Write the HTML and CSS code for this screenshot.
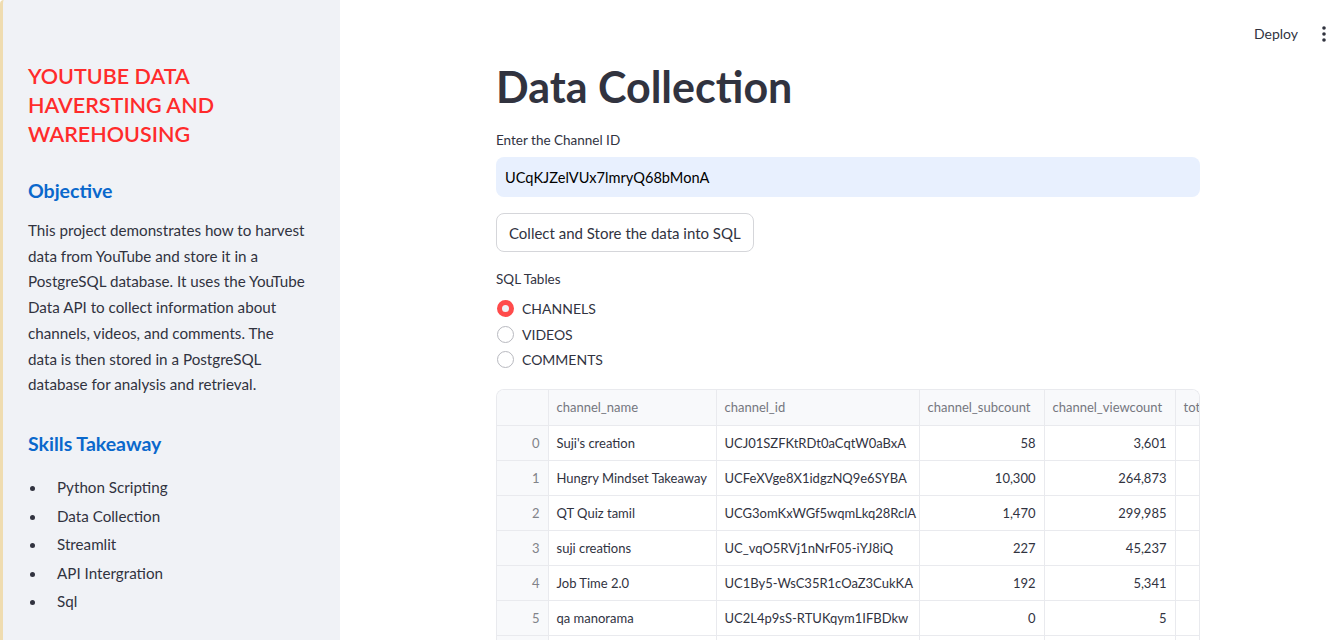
FILE: index.html
```html
<!DOCTYPE html>
<html lang="en">
<head>
<meta charset="utf-8">
<title>Data Collection</title>
<link rel="stylesheet" href="styles.css">
</head>
<body>
<div class="app">
  <aside class="sidebar">
    <h2 class="app-title">YOUTUBE DATA HAVERSTING AND WAREHOUSING</h2>
    <h3 class="side-head">Objective</h3>
    <p class="side-text">This project demonstrates how to harvest data from YouTube and store it in a PostgreSQL database. It uses the YouTube Data API to collect information about channels, videos, and comments. The data is then stored in a PostgreSQL database for analysis and retrieval.</p>
    <h3 class="side-head skills">Skills Takeaway</h3>
    <ul class="skills-list">
      <li>Python Scripting</li>
      <li>Data Collection</li>
      <li>Streamlit</li>
      <li>API Intergration</li>
      <li>Sql</li>
    </ul>
  </aside>
  <main class="main">
    <header class="toolbar">
      <span class="deploy">Deploy</span>
      <span class="menu-dots"><svg width="4" height="16" viewBox="0 0 4 16"><circle cx="2" cy="2" r="1.8" fill="#31333f"/><circle cx="2" cy="8" r="1.8" fill="#31333f"/><circle cx="2" cy="14" r="1.8" fill="#31333f"/></svg></span>
    </header>
    <div class="block">
      <h1 class="page-title">Data Collection</h1>
      <label class="field-label">Enter the Channel ID</label>
      <div class="text-input">UCqKJZelVUx7lmryQ68bMonA</div>
      <button class="btn">Collect and Store the data into SQL</button>
      <div class="field-label radio-label">SQL Tables</div>
      <div class="radio-group">
        <div class="radio checked"><span class="dot"></span>CHANNELS</div>
        <div class="radio"><span class="dot"></span>VIDEOS</div>
        <div class="radio"><span class="dot"></span>COMMENTS</div>
      </div>
      <div class="table-wrap">
        <table class="df">
          <thead>
            <tr><th class="idx"></th><th class="c-name">channel_name</th><th class="c-id">channel_id</th><th class="c-sub">channel_subcount</th><th class="c-view">channel_viewcount</th><th class="c-tot">total_videos</th></tr>
          </thead>
          <tbody>
            <tr><td class="idx">0</td><td>Suji's creation</td><td>UCJ01SZFKtRDt0aCqtW0aBxA</td><td class="num">58</td><td class="num">3,601</td><td class="num"></td></tr>
            <tr><td class="idx">1</td><td>Hungry Mindset Takeaway</td><td>UCFeXVge8X1idgzNQ9e6SYBA</td><td class="num">10,300</td><td class="num">264,873</td><td class="num"></td></tr>
            <tr><td class="idx">2</td><td>QT Quiz tamil</td><td>UCG3omKxWGf5wqmLkq28RclA</td><td class="num">1,470</td><td class="num">299,985</td><td class="num"></td></tr>
            <tr><td class="idx">3</td><td>suji creations</td><td>UC_vqO5RVj1nNrF05-iYJ8iQ</td><td class="num">227</td><td class="num">45,237</td><td class="num"></td></tr>
            <tr><td class="idx">4</td><td>Job Time 2.0</td><td>UC1By5-WsC35R1cOaZ3CukKA</td><td class="num">192</td><td class="num">5,341</td><td class="num"></td></tr>
            <tr><td class="idx">5</td><td>qa manorama</td><td>UC2L4p9sS-RTUKqym1IFBDkw</td><td class="num">0</td><td class="num">5</td><td class="num"></td></tr>
            <tr class="last"><td class="idx"></td><td></td><td></td><td class="num"></td><td class="num"></td><td class="num"></td></tr>
          </tbody>
        </table>
      </div>
    </div>
  </main>
</div>
</body>
</html>
```

FILE: styles.css
```css
* { box-sizing: border-box; }
html, body {
  margin: 0;
  padding: 0;
  height: 100%;
  overflow: hidden;
}
body {
  font-family: Lato, "Liberation Sans", sans-serif;
  color: #31333f;
  background: #ffffff;
}
.app {
  display: flex;
  height: 640px;
}
.sidebar {
  width: 340px;
  flex: none;
  background: #f0f2f6;
  padding: 62px 0 0 25px;
  border-left: 3px solid #efdcb0;
  border-top-left-radius: 4px;
}
.app-title {
  margin: 0;
  width: 260px;
  font-size: 21.5px;
  line-height: 29px;
  font-weight: 600;
  color: #ff2b2b;
}
.side-head {
  margin: 30px 0 0 0;
  font-size: 19.5px;
  line-height: 24px;
  font-weight: 700;
  color: #0a68cc;
}
.side-text {
  margin: 15px 0 0 0;
  width: 278px;
  font-size: 15.2px;
  line-height: 25.7px;
  color: #31333f;
}
.side-head.skills { margin-top: 34px; }
.skills-list {
  margin: 19px 0 0 0;
  padding: 0;
  list-style: none;
  font-size: 15.2px;
  line-height: 25.6px;
}
.skills-list li {
  margin-bottom: 3px;
  padding-left: 29px;
  position: relative;
}
.skills-list li::before {
  content: "";
  position: absolute;
  left: 2px;
  top: 11px;
  width: 5px;
  height: 5px;
  border-radius: 50%;
  background: #31333f;
}
.main {
  flex: 1;
  position: relative;
}
.toolbar {
  position: absolute;
  top: 25px;
  right: 13px;
  display: flex;
  align-items: center;
  gap: 24px;
  font-size: 14px;
}
.deploy { color: #31333f; }
.menu-dots { display: flex; align-items: center; }
.block {
  margin-left: 156px;
  width: 704px;
  display: flex;
  flex-direction: column;
  align-items: flex-start;
}
.page-title {
  margin: 60px 0 0 0;
  font-size: 43px;
  line-height: 54px;
  font-weight: 700;
  color: #31333f;
}
.field-label {
  margin-top: 16px;
  font-size: 13.5px;
  line-height: 21px;
  color: #31333f;
}
.text-input {
  margin-top: 6px;
  width: 100%;
  height: 40px;
  background: #e8f0fe;
  border-radius: 8px;
  padding: 0 9px;
  display: flex;
  align-items: center;
  font-size: 14.6px;
  color: #000;
}
.btn {
  margin-top: 16px;
  height: 39px;
  padding: 0 12px;
  border: 1px solid #d5d6da;
  border-radius: 8px;
  background: #fff;
  font-family: inherit;
  font-size: 15px;
  color: #31333f;
}
.radio-label { margin-top: 17px; }
.radio-group {
  margin-top: 6px;
  display: flex;
  flex-direction: column;
}
.radio {
  height: 25.5px;
  display: flex;
  align-items: center;
  font-size: 14px;
  gap: 8px;
}
.radio .dot {
  width: 17px;
  height: 17px;
  border-radius: 50%;
  border: 1px solid #b8b9bf;
  background: #fff;
  margin-left: 1px;
}
.radio.checked .dot {
  border: 5px solid #ff4b4b;
  background: #f0f2f6;
}
.table-wrap {
  margin-top: 16px;
  width: 704px;
  height: 260px;
  border: 1px solid #e9eaee;
  border-bottom: none;
  border-radius: 8px 8px 0 0;
  overflow: hidden;
}
.df {
  border-collapse: collapse;
  table-layout: fixed;
  width: 800px;
  font-size: 13px;
}
.df th, .df td {
  border-right: 1px solid #e9eaee;
  border-bottom: 1px solid #e9eaee;
  padding: 0 8px;
  height: 35px;
  white-space: nowrap;
  overflow: hidden;
  text-align: left;
}
.df th {
  height: 36px;
  background: #f8f9fb;
  color: #75777f;
  font-weight: 400;
}
.df .idx {
  width: 51px;
  text-align: right;
  color: #818389;
  background: #f8f9fb;
}
.df th.c-name { width: 168px; }
.df th.c-id { width: 203px; }
.df th.c-sub { width: 125px; }
.df th.c-view { width: 131px; }
.df th.c-tot { width: 122px; }
.df td.num { text-align: right; }
.df td { color: #31333f; }
```
